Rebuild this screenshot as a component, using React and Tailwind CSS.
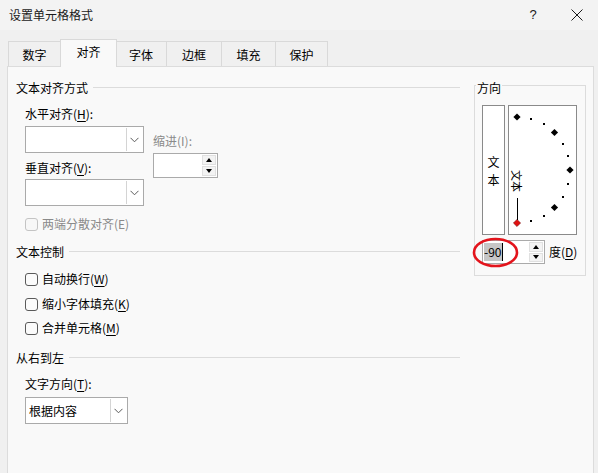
import React from "react";

const Chevron = () => (
  <svg width="9" height="6" viewBox="0 0 9 6">
    <path d="M0.5 0.8 L4.5 4.8 L8.5 0.8" fill="none" stroke="#5a5a5a" strokeWidth="1" />
  </svg>
);

const Combo = ({ w, text }) => (
  <div className={`${w} h-[27px] border border-[#aaaaaa] bg-white flex items-stretch`}>
    <div className="flex-1 flex items-center pl-[3px] text-[12px] leading-4 text-black">{text}</div>
    <div className="w-[16px] my-px mr-px border-l border-[#d4d4d4] bg-white flex items-center justify-center">
      <Chevron />
    </div>
  </div>
);

const SpinBtns = () => (
  <div className="w-[14px] my-px mr-px flex flex-col gap-px">
    <div className="flex-1 bg-[#f3f3f3] border border-[#e0e0e0] flex items-center justify-center">
      <svg width="6" height="4" viewBox="0 0 6 4"><path d="M3 0 L6 4 L0 4 Z" fill="#000" /></svg>
    </div>
    <div className="flex-1 bg-[#f3f3f3] border border-[#e0e0e0] flex items-center justify-center">
      <svg width="6" height="4" viewBox="0 0 6 4"><path d="M0 0 L6 0 L3 4 Z" fill="#000" /></svg>
    </div>
  </div>
);

const Check = ({ disabled, children }) => (
  <div className="flex items-center gap-[4px] h-4">
    <div
      className={`w-[13px] h-[13px] rounded-[3px] border ${
        disabled ? "border-[#c4c4c4] bg-[#f7f7f7]" : "border-[#5a5a5a] bg-[#fbfbfb]"
      }`}
    />
    <span className={`text-[12px] leading-4 ${disabled ? "text-[#8a8a8a]" : "text-black"}`}>{children}</span>
  </div>
);

const Header = ({ children }) => (
  <div className="flex items-center h-4">
    <span className="text-[12px] leading-4 text-black">{children}</span>
    <div className="flex-1 h-px bg-[#dcdcdc] ml-[5px] -mt-[2px]" />
  </div>
);

const U = ({ children }) => <span className="underline underline-offset-[2px]">{children}</span>;

const Dial = () => {
  const pts = [];
  for (let a = -90; a <= 90; a += 15) {
    const r = (a * Math.PI) / 180;
    const x = 8 + 53 * Math.cos(r);
    const y = 64 - 53 * Math.sin(r);
    const big = a % 45 === 0;
    pts.push({ a, x, y, big });
  }
  return (
    <svg width="67" height="128" viewBox="0 0 67 128">
      {pts.map((p) =>
        p.big ? (
          <path
            key={p.a}
            d={`M${p.x} ${p.y - 3.6} L${p.x + 3.6} ${p.y} L${p.x} ${p.y + 3.6} L${p.x - 3.6} ${p.y} Z`}
            fill={p.a === -90 ? "#e01010" : "#000"}
            stroke={p.a === -90 ? "#600" : "none"}
            strokeWidth="0.5"
          />
        ) : (
          <rect key={p.a} x={Math.round(p.x) - 1} y={Math.round(p.y) - 1} width="2" height="2" fill="#000" />
        )
      )}
      <line x1="8.5" y1="92" x2="8.5" y2="114" stroke="#000" strokeWidth="1" />
      <text
        x="8"
        y="75"
        fontSize="11"
        textAnchor="middle"
        dominantBaseline="central"
        fill="#000"
        fontFamily="'Noto Sans CJK SC', sans-serif"
        transform="rotate(90 8 75)"
      >
        文本
      </text>
    </svg>
  );
};

export default function App() {
  const tabs = [
    { t: "数字", w: "w-[53px]" },
    { t: "对齐", w: "w-[57px]", sel: true },
    { t: "字体", w: "w-[52px]" },
    { t: "边框", w: "w-[56px]" },
    { t: "填充", w: "w-[55px]" },
    { t: "保护", w: "w-[53px]" },
  ];
  return (
    <div className="w-[598px] h-[473px] overflow-hidden bg-[#f0f0f0] flex flex-col font-['Noto_Sans_CJK_SC',sans-serif] text-black select-none">
      {/* title bar */}
      <div className="h-[30px] shrink-0 bg-[#f3f3f3] flex items-center justify-between pl-[9px]">
        <span className="text-[12px] leading-4 text-[#1a1a1a]">设置单元格格式</span>
        <div className="flex items-center h-full">
          <div className="w-[44px] text-center text-[13px] leading-4 font-['Liberation_Sans',sans-serif] text-[#1a1a1a]">?</div>
          <div className="w-[43px] flex items-center justify-center">
            <svg width="12" height="12" viewBox="0 0 12 12">
              <path d="M0.5 0.5 L11.5 11.5 M11.5 0.5 L0.5 11.5" stroke="#1a1a1a" strokeWidth="1" />
            </svg>
          </div>
        </div>
      </div>
      {/* tabs */}
      <div className="h-[36px] shrink-0 flex items-end pl-[8px]">
        {tabs.map((tb, i) => (
          <div
            key={tb.t}
            className={`${tb.w} ${i > 0 ? "-ml-px" : ""} flex items-center justify-center border border-b-0 border-[#d9d9d9] text-[12px] leading-4 ${
              tb.sel
                ? "h-[28px] bg-[#f9f9f9] relative z-10 -mb-px pb-[3px] -mx-[1px]"
                : "h-[25px] bg-[#f0f0f0] pt-[2px]"
            }`}
          >
            {tb.t}
          </div>
        ))}
      </div>
      {/* panel */}
      <div className="ml-[7px] w-[587px] flex-1 border border-[#dcdcdc] bg-[#f9f9f9] pt-[13px] pl-[8px] flex gap-[14px] min-h-[420px]">
        {/* left column */}
        <div className="w-[444px] flex flex-col">
          <Header>文本对齐方式</Header>
          <div className="pl-[9px] flex flex-col">
            <div className="flex mt-[10px]">
              <div className="flex flex-col w-[119px]">
                <div className="text-[12px] leading-4">水平对齐(<U>H</U>):</div>
                <div className="mt-[4px]"><Combo w="w-[119px]" /></div>
                <div className="mt-[7px] text-[12px] leading-4">垂直对齐(<U>V</U>):</div>
                <div className="mt-[3px]"><Combo w="w-[119px]" /></div>
              </div>
              <div className="ml-[9px] pt-[27px] flex flex-col">
                <div className="text-[12px] leading-4 text-[#8a8a8a]">缩进(I):</div>
                <div className="mt-[4px] w-[65px] h-[25px] border border-[#aaaaaa] bg-white flex justify-end">
                  <SpinBtns />
                </div>
              </div>
            </div>
            <div className="mt-[10px]"><Check disabled>两端分散对齐(E)</Check></div>
          </div>
          <div className="mt-[12px]"><Header>文本控制</Header></div>
          <div className="pl-[9px] flex flex-col">
            <div className="mt-[11px]"><Check>自动换行(<U>W</U>)</Check></div>
            <div className="mt-[9px]"><Check>缩小字体填充(<U>K</U>)</Check></div>
            <div className="mt-[8px]"><Check>合并单元格(<U>M</U>)</Check></div>
          </div>
          <div className="mt-[14px]"><Header>从右到左</Header></div>
          <div className="pl-[9px] flex flex-col">
            <div className="mt-[10px] text-[12px] leading-4">文字方向(<U>T</U>):</div>
            <div className="mt-[5px]"><Combo w="w-[103px]" text="根据内容" /></div>
          </div>
        </div>
        {/* orientation group */}
        <div className="mt-[5px] w-[112px] h-[191px] border border-[#dcdcdc] flex flex-col">
          <div className="-mt-[6px] ml-px w-fit px-px bg-[#f9f9f9] text-[12px] leading-4">方向</div>
          <div className="mt-[9px] pl-[7px] flex gap-[3px]">
            <div className="w-[23px] h-[130px] border border-[#8a8a8a] bg-white flex flex-col items-center justify-center pt-[1px] text-[12px] leading-[18px]">
              <span>文</span>
              <span>本</span>
            </div>
            <div className="w-[69px] h-[130px] border border-[#8a8a8a] bg-white">
              <Dial />
            </div>
          </div>
          <div className="mt-[5px] pl-[7px] flex items-center relative">
            <div className="w-[63px] h-[24px] border border-[#aaaaaa] bg-white flex">
              <div className="flex-1 flex items-center pl-px">
                <span className="bg-[#c6c6c6] text-[12px] leading-[18px] pr-px">-90</span>
                <span className="w-px h-[18px] bg-black" />
              </div>
              <SpinBtns />
            </div>
            <span className="ml-[4px] text-[12px] leading-4">度(<U>D</U>)</span>
            <svg className="absolute left-[-3px] top-[-3px]" width="47" height="31" viewBox="0 0 47 31">
              <ellipse cx="23.5" cy="15.5" rx="21.5" ry="13.5" fill="none" stroke="#e3141c" strokeWidth="2.6" />
            </svg>
          </div>
        </div>
      </div>
    </div>
  );
}
